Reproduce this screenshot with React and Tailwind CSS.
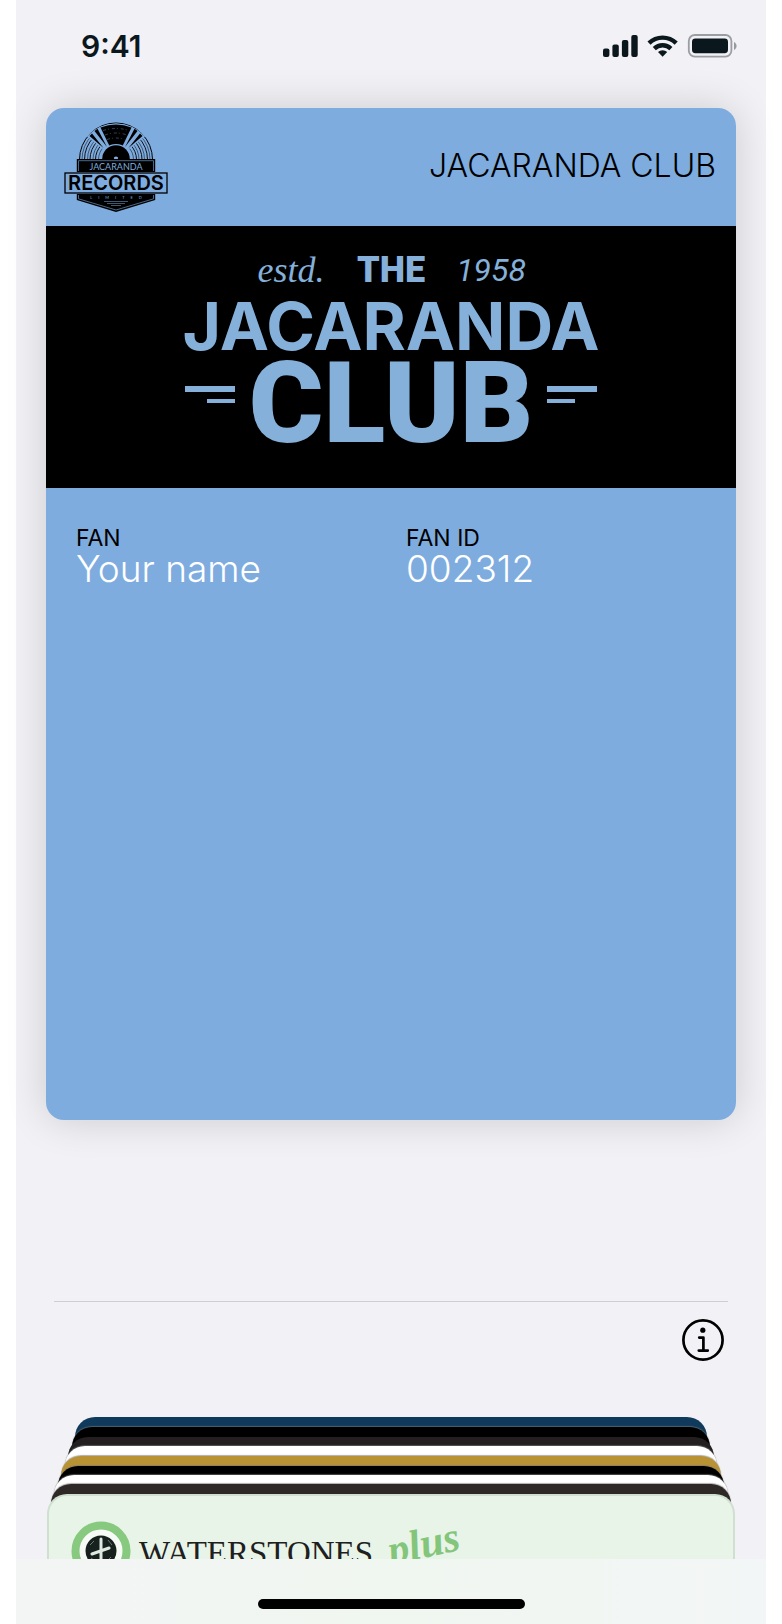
/* ── Wallet Pass Screen ───────────────────────────────
   Membership pass with the rest of the wallet stacked below
──────────────────────────────────────────────────── */

const FIELDS = [
  { id: 'fan', label: 'FAN', value: 'Your name' },
  { id: 'fan-id', label: 'FAN ID', value: '002312' },
];

const EDGE = 'shadow-[0_-1px_1px_rgba(120,120,120,0.6)]';

/* Back to front, each pass a little wider than the one behind */
const STACK = [
  { id: 'navy', className: 'mx-[59px] bg-[#0f3a5c]' },
  { id: 'black', className: `-mt-[30px] mx-14 bg-black ${EDGE}` },
  { id: 'charcoal', className: '-mt-[30px] mx-[52px] bg-[#231f20]' },
  { id: 'white', className: `-mt-[31px] mx-[49px] bg-white ${EDGE}` },
  { id: 'gold', className: `-mt-[30px] mx-[45px] bg-[#b99234] ${EDGE}` },
  { id: 'black-2', className: `-mt-[30px] mx-[42px] bg-black ${EDGE}` },
  { id: 'white-2', className: `-mt-[31px] mx-[38px] bg-white ${EDGE}` },
  { id: 'brown', className: `-mt-[31px] mx-[35px] bg-[#2e2927] ${EDGE}` },
];

/* ── Status Bar ───────────────────────────────────── */
const StatusIcons = () => (
  <svg width="136" height="26" viewBox="602 33 136 26" fill="#0a181d" aria-hidden="true">
    <rect x="603" y="48.5" width="6.4" height="8.5" rx="2" />
    <rect x="612.4" y="44.5" width="6.4" height="12.5" rx="2" />
    <rect x="621.9" y="40" width="6.4" height="17" rx="2" />
    <rect x="631.3" y="35" width="6.4" height="22" rx="2" />
    <g fill="none" stroke="#0a181d" strokeWidth="4.4">
      <path d="M649 43.2a19.5 19.5 0 0 1 27.2 0" />
      <path d="M654.3 48.6a12 12 0 0 1 16.6 0" />
    </g>
    <path d="M662.6 56.8l-4.6-4.7a6.8 6.8 0 0 1 9.2 0z" />
    <rect x="688.8" y="35" width="42.6" height="21.6" rx="6" fill="none" stroke="#0a181d" strokeOpacity="0.38" strokeWidth="1.8" />
    <rect x="692" y="38.4" width="36" height="14.8" rx="3.4" />
    <path d="M734 42c3.4 1.4 3.4 6.6 0 8z" fillOpacity="0.4" />
  </svg>
);

const StatusBar = () => (
  <header className="flex h-[108px] items-start justify-between pt-7 pr-7 pl-[65px]">
    <time className="text-[30px] leading-9 font-semibold text-[#0a181d]">9:41</time>
    <div className="pt-[5px]">
      <StatusIcons />
    </div>
  </header>
);

/* ── Record Label Logo ────────────────────────────── */
const RecordsLogo = () => (
  <svg width="112" height="100" viewBox="0 0 112 100" role="img" aria-label="Jacaranda Records Limited">
    <g fill="none" stroke="#000">
      <path d="M19.5 41.5a36.5 36.5 0 1 1 73 0" strokeWidth="1" />
      <path d="M22 41.5a34 34 0 0 1 68 0" strokeWidth="0.5" />
      <path d="M24.5 41.5a31.5 31.5 0 0 1 63 0" strokeWidth="0.9" />
      <path d="M27.5 41.5a28.5 28.5 0 0 1 57 0" strokeWidth="0.5" />
      <path d="M30 41.5a26 26 0 0 1 52 0" strokeWidth="0.9" />
      <path d="M33 41.5a23 23 0 0 1 46 0" strokeWidth="0.5" />
      <path d="M35.5 41.5a20.5 20.5 0 0 1 41 0" strokeWidth="0.9" />
      <path d="M38.5 41.5a17.5 17.5 0 0 1 35 0" strokeWidth="0.5" />
    </g>
    {/* Light wedges cut through the grooves */}
    <path d="M56 41.5L27 18.5Q39 5.5 56 5.5T85 18.5z" fill="#7eacdf" />
    <path d="M56 41.5L40.5 9.5Q56 3.5 71.5 9.5z" />
    <path d="M47 29L34.5 13l3-2.2zM43.5 30L29.5 18l2.5-2.5zM65 29L77.5 13l-3-2.2zM68.5 30L82.5 18l-2.5-2.5z" />
    <g fill="none" stroke="#7eacdf" strokeWidth="0.4" strokeDasharray="3 2 1 3">
      <path d="M43 12.5q13-4 26 0M45 17q11-4 22 0M47 21.5q9-3 18 0" />
    </g>
    <circle cx="56" cy="41" r="15" fill="#7eacdf" />
    <circle cx="56" cy="41" r="13.8" />
    <ellipse cx="56" cy="40" rx="2.2" ry="1.5" fill="#7eacdf" />

    {/* Name plates */}
    <path d="M16.8 41h78.4v41L56 94 16.8 82z" />
    <path d="M18.5 53V42.7h75V53M18.5 77v3.8L56 92l37.5-11.2V77" fill="none" stroke="#7eacdf" strokeWidth="0.6" />
    <text x="56" y="52" textAnchor="middle" fill="#7eacdf" fontSize="9" className="font-['Lato']">JACARANDA</text>
    <rect x="4" y="54" width="104" height="22" fill="#7eacdf" />
    <rect x="5" y="55" width="102" height="20" fill="none" stroke="#000" strokeWidth="1.3" />
    <text x="56" y="72" textAnchor="middle" fontSize="20" fontWeight="600" className="font-['Inter']">RECORDS</text>
    <text x="59" y="81" textAnchor="middle" fill="#7eacdf" fontSize="4" letterSpacing="6" className="font-['Lato']">LIMITED</text>
    <path d="M44 83.5h24M47 85.5h18M51 87.5h10" stroke="#7eacdf" strokeWidth="0.5" />
  </svg>
);

/* ── Banner ───────────────────────────────────────── */
const Speedlines = ({ className }) => (
  <div className={`flex flex-col gap-[7px] pb-[18px] ${className}`} aria-hidden="true">
    <span className="h-1.5 w-[50px] bg-[#84b0d9]" />
    <span className="h-1 w-7 bg-[#84b0d9]" />
  </div>
);

const Banner = () => (
  <div className="flex h-[262px] flex-col items-center bg-black pt-5 text-[#84b0d9]">
    <div className="grid grid-cols-[100px_100px_100px] items-center text-center">
      <span className="font-['Liberation_Serif',serif] text-[36px] leading-[48px] italic">estd.</span>
      <span className="font-['Roboto',sans-serif] text-[36px] leading-[48px] font-black">THE</span>
      <span className="font-['Roboto',sans-serif] text-[32px] leading-[48px] italic">1958</span>
    </div>
    <p className="text-[66px] leading-[64px] font-bold">JACARANDA</p>
    <div className="flex items-center gap-3.5">
      <Speedlines className="items-end" />
      <p className="font-['Roboto',sans-serif] text-[114px] leading-[90px] font-black">CLUB</p>
      <Speedlines className="items-start" />
    </div>
  </div>
);

/* ── Pass ─────────────────────────────────────────── */
const Pass = () => (
  <article className="mx-[30px] overflow-hidden rounded-[18px] bg-[#7eacdf] shadow-[0_0_40px_rgba(0,0,0,0.16)]">
    <div className="flex h-[118px] items-center justify-between pr-5 pl-3.5">
      <div className="pt-0.5">
        <RecordsLogo />
      </div>
      <h1 className="pb-0.5 text-[32px] leading-10 font-[350] text-black">JACARANDA CLUB</h1>
    </div>
    <Banner />
    <dl className="grid min-h-[632px] grid-cols-2 content-start pt-9 pl-[30px]">
      {FIELDS.map((f) => (
        <div key={f.id}>
          <dt className="text-[23px] leading-7 text-black">{f.label}</dt>
          <dd className="text-[37px] leading-[34px] font-light text-white">{f.value}</dd>
        </div>
      ))}
    </dl>
  </article>
);

/* ── Info Button ──────────────────────────────────── */
const InfoButton = () => (
  <button type="button" aria-label="Pass details" className="cursor-pointer">
    <svg width="42" height="42" viewBox="0 0 42 42" fill="none" stroke="#000" strokeLinecap="round" strokeLinejoin="round">
      <circle cx="21" cy="21" r="19.6" strokeWidth="2.7" />
      <circle cx="20.8" cy="11.2" r="2.6" fill="#000" stroke="none" />
      <path d="M17.2 18.6h4.2v12.8M16.8 31.6h9" strokeWidth="2.7" />
    </svg>
  </button>
);

/* ── Front card of the stack ──────────────────────── */
const BookshopCard = () => (
  <div className="-mt-[30px] mx-[31px] flex h-[65px] items-start overflow-hidden rounded-t-[20px] border-2 border-b-0 border-[#cfe0d0] bg-[#e8f4e7] pt-[25px] pl-[22px]">
    <svg width="60" height="60" viewBox="0 0 60 60" className="shrink-0" aria-hidden="true">
      <circle cx="30" cy="30" r="25.5" fill="#f7fbf6" stroke="#86c97f" strokeWidth="8" />
      <circle cx="30" cy="30" r="15.5" fill="#17211d" />
      <path d="M30 18v24M21 33l17-6" fill="none" stroke="#dfe9e2" strokeWidth="3" strokeLinecap="round" />
      <path d="M19 24l4-4M37 19l4 5M20 37l4 3M36 40l4-4" stroke="#6b7a72" strokeWidth="1" />
    </svg>
    <span className="pt-3 pl-2 font-['Liberation_Serif',serif] text-[33px] leading-10 text-[#1d201e]">WATERSTONES</span>
    <span className="-rotate-12 pt-1 pl-3.5 font-['Liberation_Serif',serif] text-[42px] leading-10 font-bold text-[#82c57b] italic">plus</span>
  </div>
);

const App = () => (
  <div className="bg-white px-4 font-['Inter',sans-serif]">
    <main className="flex min-h-screen flex-col bg-[#f2f1f6]">
      <StatusBar />
      <Pass />

      <div className="mx-[38px] mt-[181px] flex justify-end border-t border-[#cfced4] pt-[17px] pr-1">
        <InfoButton />
      </div>

      <section className="pt-14" aria-label="Other passes">
        {STACK.map((card) => (
          <div key={card.id} className={`h-10 rounded-t-[20px] ${card.className}`} />
        ))}
        <BookshopCard />
      </section>

      <footer className="flex h-[65px] items-center justify-center bg-linear-to-r from-[#f3f5f5] via-[#f0f6f0] to-[#f3f6f6] pt-6">
        <div className="h-2.5 w-[267px] rounded-full bg-black" />
      </footer>
    </main>
  </div>
);

export default App;
